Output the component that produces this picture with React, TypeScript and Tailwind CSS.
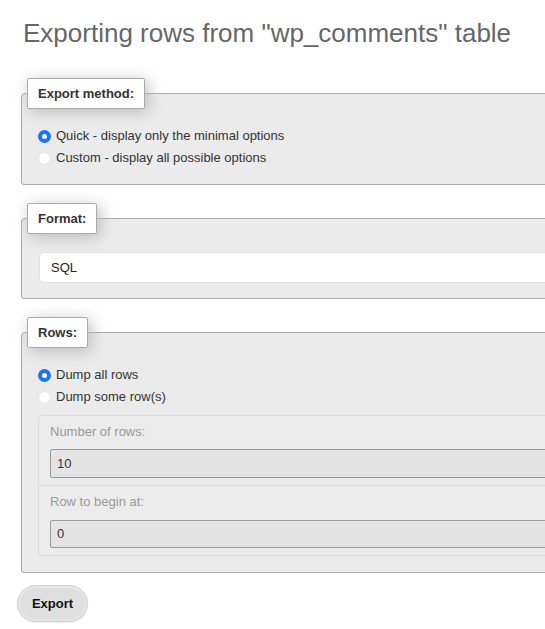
import React from "react";

const font = { fontFamily: '"Liberation Sans", Arial, sans-serif' };

function Radio({ checked, label }: { checked?: boolean; label: string }) {
  return (
    <label className="flex items-center h-[22px] gap-[5px] text-[13px] text-[#333]">
      {checked ? (
        <span className="w-[13px] h-[13px] rounded-full bg-[#1a73f0] flex items-center justify-center">
          <span className="w-[5px] h-[5px] rounded-full bg-white" />
        </span>
      ) : (
        <span className="w-[13px] h-[13px] rounded-full bg-white border border-[#e2e2e2]" />
      )}
      <span>{label}</span>
    </label>
  );
}

function Panel({ title, children, className = "" }: { title: string; children: React.ReactNode; className?: string }) {
  return (
    <fieldset className={`border border-[#aaa] rounded-t-[4px] rounded-b-[3px] bg-[#ebebeb] ${className}`}>
      <legend className="ml-[5px] px-[10px] h-[31px] leading-[29px] bg-white border border-[#aaa] rounded-[2px] font-bold text-[13px] text-[#333] shadow-[3px_3px_15px_#bbb]">
        {title}
      </legend>
      {children}
    </fieldset>
  );
}

function NumberRow({ label, value, gap }: { label: string; value: string; gap: string }) {
  return (
    <div className="pt-[8px] pb-[7px] pl-[11px]">
      <div className="h-[16px] leading-[16px] text-[13px] text-[#9a9a9a]">{label}</div>
      <div className={`${gap} h-[29px] bg-[#e4e4e4] border border-[#9a9a9a] rounded-l-[2px] flex items-center pl-[6px] text-[13px] text-[#333]`}>
        {value}
      </div>
    </div>
  );
}

export default function App() {
  return (
    <div className="w-[545px] h-[629px] overflow-hidden bg-white" style={font}>
      <div className="w-[640px] pl-[21px] pt-[18px]">
        <h1 className="ml-[2px] text-[26px] leading-[30px] text-[#666] font-normal">
          Exporting rows from "wp_comments" table
        </h1>

        <Panel title="Export method:" className="mt-[30px]">
          <div className="pl-[16px] pt-[16px] pb-[15px]">
            <Radio checked label="Quick - display only the minimal options" />
            <Radio label="Custom - display all possible options" />
          </div>
        </Panel>

        <Panel title="Format:" className="mt-[18px]">
          <div className="pl-[17px] pt-[18px] pb-[15px]">
            <div className="h-[31px] bg-white border border-[#e0e0e0] rounded-l-[4px] flex items-center pl-[11px] text-[13px] text-[#222]">
              SQL
            </div>
          </div>
        </Panel>

        <Panel title="Rows:" className="mt-[18px]">
          <div className="pl-[16px] pt-[16px] pb-[16px]">
            <Radio checked label="Dump all rows" />
            <Radio label="Dump some row(s)" />
            <div className="mt-[7px] border border-r-0 border-[#dcdcdc] rounded-l-[4px] bg-[#ececec]">
              <NumberRow label="Number of rows:" value="10" gap="mt-[9px]" />
              <div className="border-t border-[#dcdcdc]" />
              <NumberRow label="Row to begin at:" value="0" gap="mt-[10px] !h-[28px]" />
            </div>
          </div>
        </Panel>

        <button className="mt-[12px] -ml-[4px] w-[71px] h-[37px] rounded-full bg-[#dfdfdf] border border-[#d2d2d2] shadow-[inset_0_0_0_2px_#e6e6e6,0_1px_2px_rgba(0,0,0,0.08)] font-bold text-[13px] text-[#111]">
          Export
        </button>
      </div>
    </div>
  );
}
